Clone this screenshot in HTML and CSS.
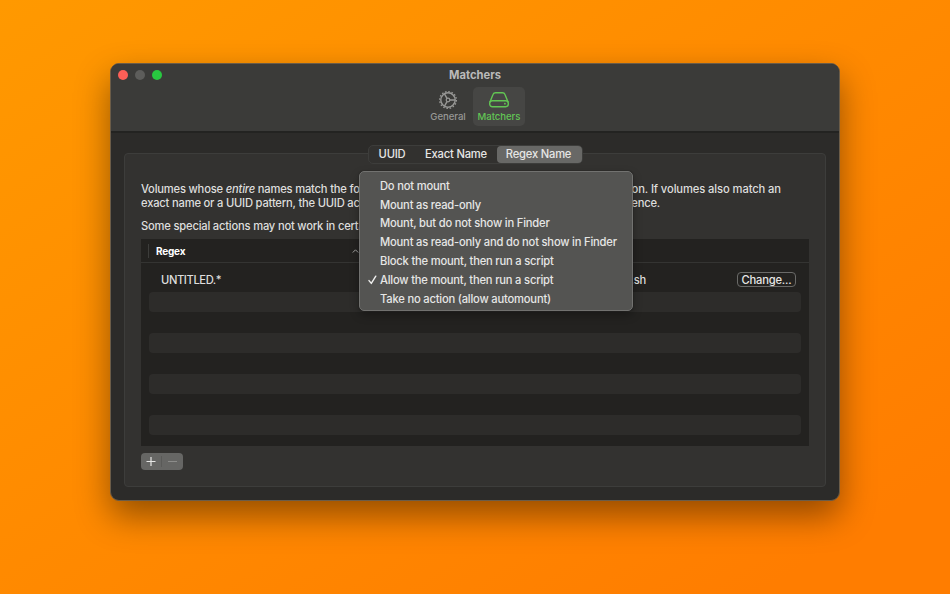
FILE: index.html
```
<!DOCTYPE html>
<html lang="en">
<head>
<meta charset="UTF-8">
<meta name="viewport" content="width=device-width, initial-scale=1.0">
<title>Matchers</title>
<link rel="stylesheet" href="styles.css">
</head>
<body>

<div class="window">
  <div class="titlebar">
    <div class="lights">
      <span class="light close"></span>
      <span class="light minimize"></span>
      <span class="light zoom"></span>
    </div>
    <div class="title">Matchers</div>
    <div class="toolbar">
      <div class="tool">
        <svg width="20" height="20" viewBox="0 0 20 20" fill="none" stroke="currentColor">
          <circle cx="10" cy="10" r="8.4" stroke-width="1.3" stroke-dasharray="1.6 1.7"/>
          <circle cx="10" cy="10" r="7.2" stroke-width="1.4"/>
          <circle cx="10" cy="10" r="1.8" stroke-width="1.2"/>
          <path d="M12 10h5M9 8.3L6.5 3.9M9 11.7l-2.5 4.4" stroke-width="1.4"/>
        </svg>
        <span>General</span>
      </div>
      <div class="tool selected">
        <svg width="20" height="20" viewBox="0 0 20 20" fill="none" stroke="currentColor" stroke-width="1.4">
          <path d="M.9 12.2L4 4.6Q4.7 2.7 6.6 2.7h6.8Q15.3 2.7 16 4.6l3.1 7.6"/>
          <rect x=".7" y="10.7" width="18.6" height="6" rx="2.6"/>
          <circle cx="15.9" cy="13.7" r=".9" fill="currentColor" stroke="none"/>
        </svg>
        <span>Matchers</span>
      </div>
    </div>
  </div>

  <div class="content">
    <div class="group">
      <div class="tabs">
        <span class="tab tab-uuid">UUID</span>
        <span class="tab tab-exact">Exact Name</span>
        <span class="tab tab-regex active">Regex Name</span>
      </div>

      <div class="help">
        <p class="line first"><span>Volumes whose <em>entire</em> names match the following</span><span class="end">action. If volumes also match an</span></p>
        <p class="line second"><span>exact name or a UUID pattern, the UUID action</span><span>precedence.</span></p>
        <p class="line third"><span>Some special actions may not work in certain cases.</span></p>
      </div>

      <div class="table">
        <div class="thead">
          <span class="regex">Regex</span>
          <svg width="7" height="4" viewBox="0 0 7 4" fill="none" stroke="#a5a5a4" stroke-width="1"><path d="M.8 3.5L3.5.8l2.7 2.7"/></svg>
        </div>
        <div class="row">
          <span class="pattern">UNTITLED.*</span>
          <span class="script">script.sh</span>
          <button class="change">Change...</button>
        </div>
        <div class="stripe"></div>
        <div class="stripe"></div>
        <div class="stripe"></div>
        <div class="stripe"></div>
      </div>

      <div class="buttons">
        <svg width="42" height="17" viewBox="0 0 42 17" fill="none">
          <path d="M10 4v9M5.5 8.5h9" stroke="#e6e6e5" stroke-width="1.2"/>
          <path d="M20.5 3v11" stroke="#5a5a58"/>
          <path d="M27 8.5h9" stroke="#8c8c8a"/>
        </svg>
      </div>
    </div>
  </div>

  <div class="menu">
    <div class="item">Do not mount</div>
    <div class="item">Mount as read-only</div>
    <div class="item">Mount, but do not show in Finder</div>
    <div class="item">Mount as read-only and do not show in Finder</div>
    <div class="item">Block the mount, then run a script</div>
    <div class="item"><svg class="check" width="9" height="10" viewBox="0 0 9 10" fill="none" stroke="#f0f0ef" stroke-width="1.4" stroke-linecap="round" stroke-linejoin="round"><path d="M1 5.6l2.3 2.8L7.8 1.2"/></svg>Allow the mount, then run a script</div>
    <div class="item">Take no action (allow automount)</div>
  </div>
</div>

</body>
</html>
```
FILE: styles.css
```
* {
  box-sizing: border-box;
}
body {
  margin: 0;
  height: 594px;
  overflow: hidden;
  padding: 63px 0 0 110px;
  background: linear-gradient(to bottom right, #ff9900 0%, #ff7d00 90%);
  font-family: Inter, "Liberation Sans", sans-serif;
  font-size: 11.2px;
  font-weight: 500;
  line-height: 14px;
  letter-spacing: -0.2px;
  color: #dededd;
}
.window {
  position: relative;
  width: 730px;
  height: 438px;
  border: 1.5px solid #6b5c48;
  border-radius: 9px;
  background: #2c2b29;
  box-shadow: 0 15px 34px rgba(0, 0, 0, 0.42);
}
.titlebar {
  height: 69px;
  padding-top: 4px;
  background: #3b3b39;
  border-bottom: 2px solid #232321;
  border-radius: 8px 8px 0 0;
}
.lights {
  display: flex;
  gap: 7px;
  height: 14px;
  padding: 2px 0 0 6.5px;
  margin-bottom: -14px;
}
.light {
  width: 10px;
  height: 10px;
  border-radius: 50%;
}
.close {
  background: #fe5f57;
}
.minimize {
  background: #5d5d5b;
}
.zoom {
  background: #28c840;
}
.title {
  text-align: center;
  font-weight: 700;
  letter-spacing: 0;
  color: #bababa;
}
.toolbar {
  display: flex;
  justify-content: center;
  padding: 5px 2px 0 0;
}
.tool {
  display: flex;
  flex-direction: column;
  align-items: center;
  width: 50px;
  height: 39px;
  padding-top: 3px;
  border-radius: 5px;
  font-size: 9.6px;
  line-height: 13px;
  letter-spacing: -0.05px;
  color: #989896;
}
.tool.selected {
  width: 52px;
  background: #464644;
  color: #62c554;
}
.content {
  padding: 20px 13px 0;
}
.group {
  height: 334px;
  padding: 0 16px;
  border: 1.5px solid #3d3d3b;
  border-radius: 4px;
  background: #333230;
}
.tabs {
  display: flex;
  width: 215px;
  height: 19px;
  margin: -9px auto 0;
  border: 1px solid #3d3d3b;
  border-radius: 5px;
  background: #32312f;
}
.tab {
  height: 17px;
  padding-right: 1px;
  line-height: 17px;
  text-align: center;
  color: #e6e6e5;
}
.tab-uuid {
  width: 48px;
}
.tab-exact {
  width: 80px;
}
.tab-regex {
  width: 85px;
}
.tab.active {
  border-radius: 4px;
  background: #686866;
}
.help {
  height: 75px;
  padding-top: 18px;
}
.line {
  display: flex;
  justify-content: space-between;
  height: 14px;
  margin: 0;
  white-space: nowrap;
}
.first {
  width: 640px;
}
.second {
  width: 519px;
}
.third {
  margin-top: 9px;
}
.end {
  letter-spacing: -0.1px;
}
.table {
  height: 207px;
  padding: 0 8px;
  background: #232220;
}
.thead {
  display: flex;
  align-items: center;
  height: 24px;
  margin: 0 -8px;
  padding-left: 7px;
  border-bottom: 1.5px solid #343432;
}
.regex {
  width: 204px;
  padding-left: 7px;
  border-left: 1px solid #3d3d3b;
  font-size: 10px;
  font-weight: 700;
  color: #fff;
}
.row {
  display: flex;
  align-items: center;
  height: 29px;
  padding: 4px 5px 0 12px;
}
.pattern {
  flex: 1;
  letter-spacing: -0.4px;
}
.script {
  margin-right: 91px;
}
.change {
  width: 59px;
  height: 15px;
  padding: 0;
  border: 1px solid #6a6a68;
  border-radius: 4px;
  background: #232220;
  font: inherit;
  line-height: 12px;
  letter-spacing: inherit;
  color: #e6e6e5;
}
.stripe {
  height: 20px;
  margin-bottom: 21px;
  border-radius: 4px;
  background: #2d2c2a;
}
.buttons {
  width: 42px;
  height: 17px;
  margin-top: 7px;
  border-radius: 4px;
  background: #666664;
}
.buttons svg {
  display: block;
}
/* popup lies over the table and the help text */
.menu {
  position: absolute;
  left: 248px;
  top: 107px;
  width: 274px;
  height: 140px;
  padding: 4.9px 0 0 20px;
  border: 1px solid #727270;
  border-radius: 5px;
  background: #545452;
  box-shadow: 0 4px 10px rgba(0, 0, 0, 0.3), 0 0 1px #111;
}
.item {
  position: relative;
  height: 18.8px;
  line-height: 18.8px;
  white-space: nowrap;
  color: #e6e6e5;
}
.check {
  position: absolute;
  left: -12px;
  top: 4px;
}
```
